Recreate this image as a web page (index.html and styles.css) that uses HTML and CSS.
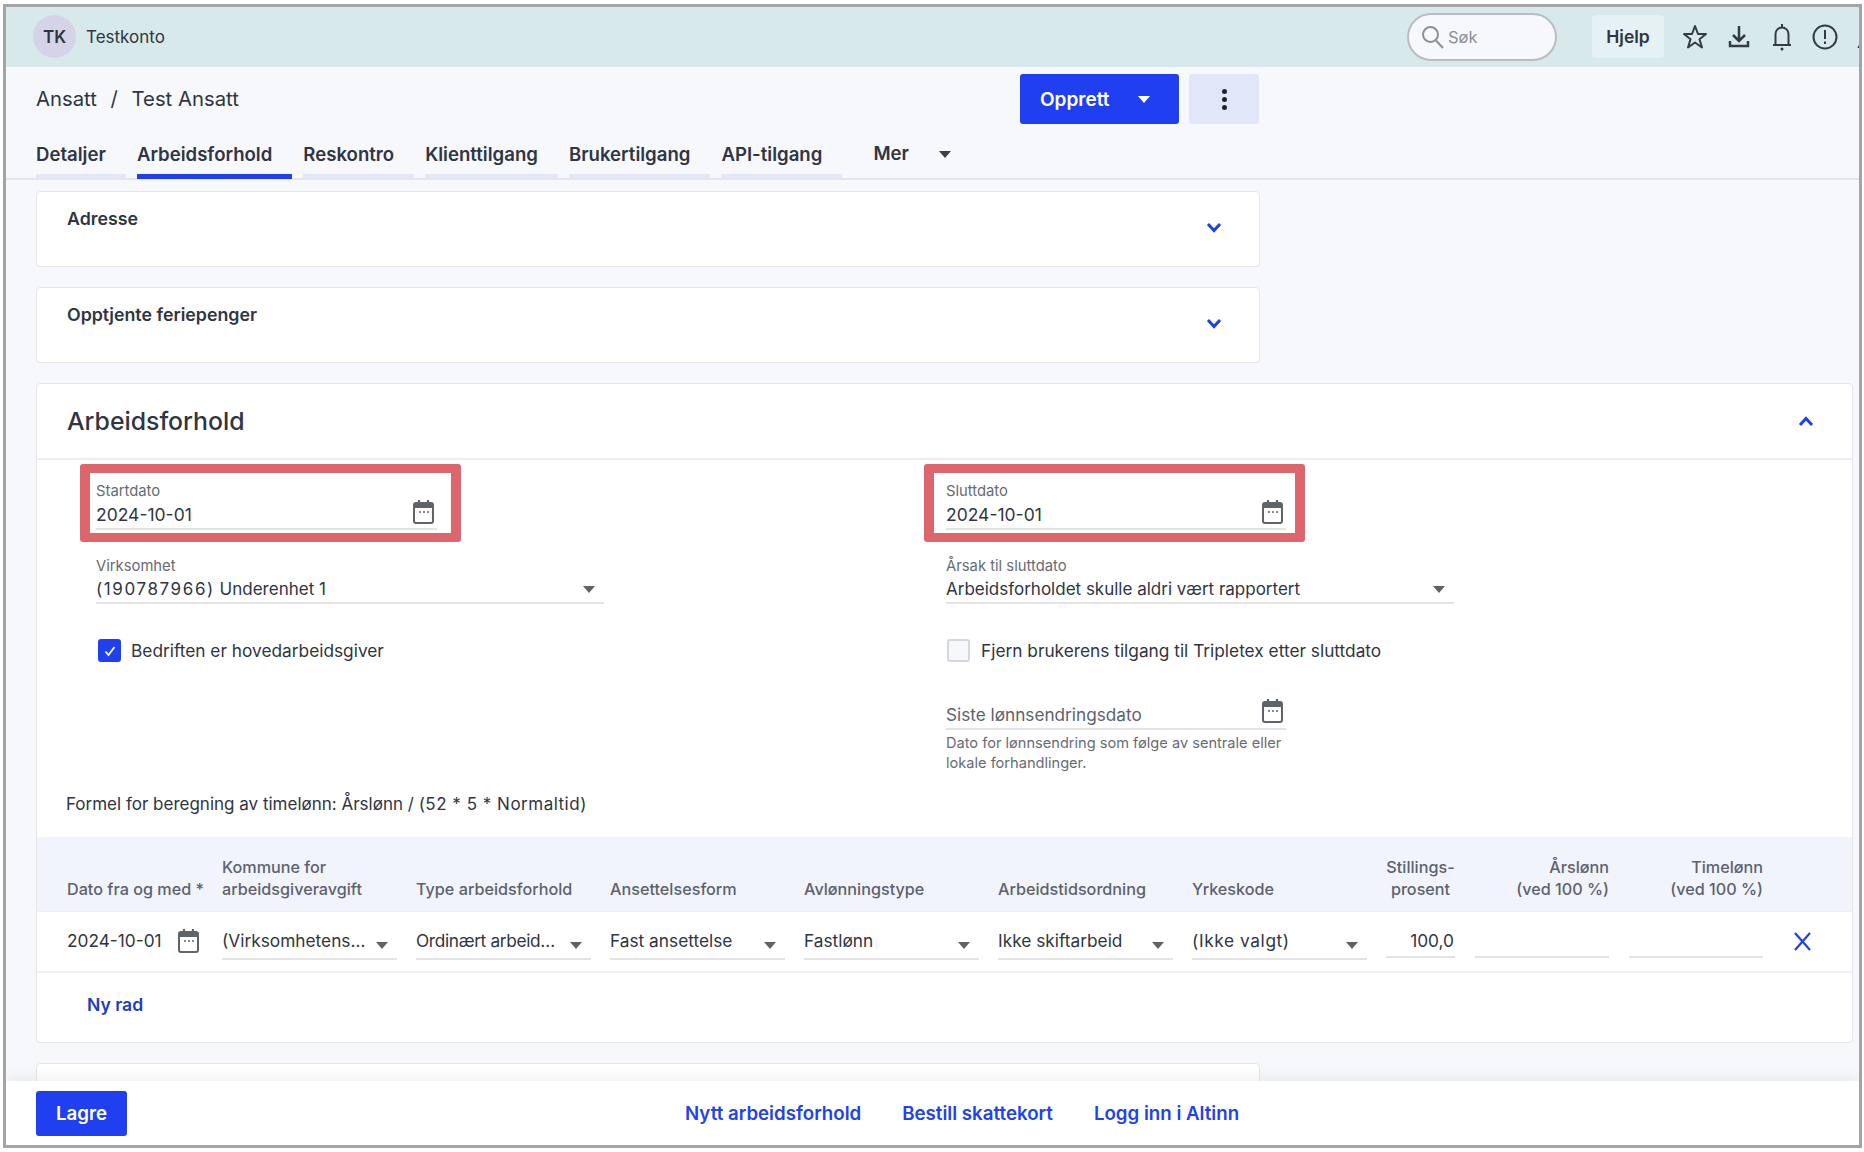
FILE: index.html
```html
<!DOCTYPE html>
<html lang="no">
<head>
    <meta charset="UTF-8">
    <title>Ansatt - Test Ansatt</title>
    <link rel="stylesheet" href="styles.css">
</head>
<body>
    <svg class="iconDefs" width="0" height="0">
        <symbol id="calendar" viewBox="0 0 21 24">
            <path d="M6 0v5M15 0v5" fill="none" stroke="currentColor" stroke-width="2.200"/>
            <rect x="1" y="3" width="19" height="20" rx="2" fill="none" stroke="currentColor" stroke-width="2"/>
            <rect x="1" y="3" width="19" height="5" fill="currentColor"/>
            <path d="M6 12h2M10 12h2M14 12h2" stroke="currentColor" stroke-width="1.300"/>
        </symbol>
    </svg>

    <div class="frame">
        <header class="topbar">
            <div class="account">
                <span class="avatar">TK</span>
                <span>Testkonto</span>
            </div>
            <div class="topActions">
                <div class="search">
                    <svg width="23" height="24" viewBox="0 0 23 24" fill="none" stroke="#8b9096" stroke-width="2"><circle cx="9.5" cy="9.5" r="7.5"/><path d="M15 15.5l7 7.5"/></svg>
                    <span>Søk</span>
                </div>
                <button class="helpBtn">Hjelp</button>
                <svg class="topIcon" width="24" height="26" viewBox="0 0 24 26" fill="none" stroke="#343a46" stroke-width="2" stroke-linejoin="round"><path d="M12 2l3 8h8l-6.500 5.200 2.500 8.300-7-5-7 5 2.500-8.300L1 10h8z"/></svg>
                <svg class="topIcon" width="24" height="26" viewBox="0 0 24 26" fill="none" stroke="#343a46" stroke-width="2.500"><path d="M12 2v14M6 11l6 6 6-6M3 17v5h18v-5"/></svg>
                <svg class="topIcon" width="24" height="28" viewBox="0 0 24 28" fill="none" stroke="#343a46" stroke-width="2"><path d="M3 22h18M5.500 22V11a6.500 6.500 0 0 1 13 0v11M12 1v3"/><circle cx="12" cy="26" r="1.500" fill="#343a46" stroke="none"/></svg>
                <svg class="topIcon alertIcon" width="26" height="26" viewBox="0 0 26 26" fill="none" stroke="#343a46" stroke-width="2"><circle cx="13" cy="13" r="11.500"/><path d="M13 6v9M13 17.500v2.500"/></svg>
                <svg class="topIcon cutIcon" width="24" height="26" viewBox="0 0 24 26" fill="none" stroke="#343a46" stroke-width="2"><path d="M12 3L2 23h20z"/></svg>
            </div>
        </header>

        <main class="page">
            <div class="titleRow">
                <div class="crumbs">Ansatt <span class="slash">/</span> Test Ansatt</div>
                <div class="titleBtns">
                    <button class="createBtn">Opprett <span class="caretDown white"></span></button>
                    <button class="dotsBtn"><i></i><i></i><i></i></button>
                </div>
            </div>

            <nav class="tabs">
                <a class="tab">Detaljer</a>
                <a class="tab active">Arbeidsforhold</a>
                <a class="tab">Reskontro</a>
                <a class="tab">Klienttilgang</a>
                <a class="tab">Brukertilgang</a>
                <a class="tab">API-tilgang</a>
                <a class="tabMore">Mer <span class="caretDown dark"></span></a>
            </nav>

            <section class="card smallCard">
                <h3>Adresse</h3>
                <svg class="chevron" width="16" height="11" viewBox="0 0 16 11" fill="none" stroke="#1f3ff0" stroke-width="3"><path d="M2 2l6 6.500L14 2"/></svg>
            </section>
            <section class="card smallCard">
                <h3>Opptjente feriepenger</h3>
                <svg class="chevron" width="16" height="11" viewBox="0 0 16 11" fill="none" stroke="#1f3ff0" stroke-width="3"><path d="M2 2l6 6.500L14 2"/></svg>
            </section>

            <section class="card mainCard">
                <div class="mainHead">
                    <h2>Arbeidsforhold</h2>
                    <svg width="16" height="11" viewBox="0 0 16 11" fill="none" stroke="#1f3ff0" stroke-width="3"><path d="M2 9l6-6.500L14 9"/></svg>
                </div>

                <div class="formGrid">
                    <div class="formCol">
                        <div class="marked">
                            <div class="field dateField">
                                <label>Startdato</label>
                                <div class="fieldValue"><span class="digits">2024-10-01</span> <svg class="calIcon"><use href="#calendar"/></svg></div>
                            </div>
                        </div>
                        <div class="field selectField">
                            <label>Virksomhet</label>
                            <div class="fieldValue"><span><span class="orgNumber">(190787966)</span> Underenhet 1</span> <span class="caretDown grey"></span></div>
                        </div>
                        <div class="checkRow">
                            <span class="checkbox checked">
                                <svg width="14" height="14" viewBox="0 0 14 14" fill="none" stroke="#fff" stroke-width="1.800"><path d="M2.500 7.500l3 3.500 6-8"/></svg>
                            </span>
                            Bedriften er hovedarbeidsgiver
                        </div>
                    </div>

                    <div class="formCol rightCol">
                        <div class="marked">
                            <div class="field dateField">
                                <label>Sluttdato</label>
                                <div class="fieldValue"><span class="digits">2024-10-01</span> <svg class="calIcon"><use href="#calendar"/></svg></div>
                            </div>
                        </div>
                        <div class="field selectField">
                            <label>Årsak til sluttdato</label>
                            <div class="fieldValue">Arbeidsforholdet skulle aldri vært rapportert <span class="caretDown grey"></span></div>
                        </div>
                        <div class="checkRow">
                            <span class="checkbox"></span>
                            Fjern brukerens tilgang til Tripletex etter sluttdato
                        </div>
                        <div class="field dateField emptyDate">
                            <div class="fieldValue placeholder">Siste lønnsendringsdato <svg class="calIcon"><use href="#calendar"/></svg></div>
                        </div>
                        <p class="helpText">Dato for lønnsendring som følge av sentrale eller<br>lokale forhandlinger.</p>
                    </div>
                </div>

                <p class="formula">Formel for beregning av timelønn: Årslønn / <span class="formulaPart">(52 * 5 * Normaltid)</span></p>

                <div class="tableRow tableHead">
                    <div>Dato fra og med *</div>
                    <div>Kommune for<br>arbeidsgiveravgift</div>
                    <div>Type arbeidsforhold</div>
                    <div>Ansettelsesform</div>
                    <div>Avlønningstype</div>
                    <div>Arbeidstidsordning</div>
                    <div>Yrkeskode</div>
                    <div class="center">Stillings-<br>prosent</div>
                    <div class="right">Årslønn<br>(ved 100 %)</div>
                    <div class="right">Timelønn<br>(ved 100 %)</div>
                </div>
                <div class="tableRow tableBody">
                    <div class="dateCell">2024-10-01 <svg class="calIcon"><use href="#calendar"/></svg></div>
                    <div class="selectCell"><span>(Virksomhetens…</span><span class="caretDown grey"></span></div>
                    <div class="selectCell"><span class="tight">Ordinært arbeid…</span><span class="caretDown grey"></span></div>
                    <div class="selectCell"><span>Fast ansettelse</span><span class="caretDown grey"></span></div>
                    <div class="selectCell"><span>Fastlønn</span><span class="caretDown grey"></span></div>
                    <div class="selectCell"><span>Ikke skiftarbeid</span><span class="caretDown grey"></span></div>
                    <div class="selectCell"><span class="spaced">(Ikke valgt)</span><span class="caretDown grey"></span></div>
                    <div class="numCell">100,0</div>
                    <div class="numCell"></div>
                    <div class="numCell"></div>
                    <svg class="removeIcon" width="19" height="19" viewBox="0 0 19 19" fill="none" stroke="#1f3ff0" stroke-width="2.200"><path d="M2 1l15 17M17 1L2 18"/></svg>
                </div>
                <a class="newRow">Ny rad</a>
            </section>

            <section class="card nextCard"></section>
        </main>

        <footer class="bottomBar">
            <button class="saveBtn">Lagre</button>
            <div class="bottomLinks">
                <a>Nytt arbeidsforhold</a>
                <a>Bestill skattekort</a>
                <a>Logg inn i Altinn</a>
            </div>
        </footer>
    </div>
</body>
</html>
```

FILE: styles.css
```css
*{
    box-sizing: border-box;
}

body{
    margin: 0;
    background: #fff;
    font-family: "Inter", "Noto Sans", sans-serif;
    color: #2f3542;
    font-size: 16px;
}
.iconDefs{
    position: absolute;
}
.frame{
    margin: 4px 2px 0 3px;
    height: 1144px;
    border: 3px solid #a3a4a6;
    background: #f6f8fc;
    display: flex;
    flex-direction: column;
    overflow: hidden;
}

/* top bar */
.topbar{
    height: 60px;
    flex: none;
    background: #d8e9ec;
    display: flex;
    align-items: center;
    justify-content: space-between;
    padding: 0 0 1px 27px;
}
.account{
    display: flex;
    align-items: center;
    gap: 10px;
    font-size: 17px;
}
.avatar{
    width: 43px;
    height: 43px;
    border-radius: 50%;
    background: #d5d3e8;
    display: flex;
    align-items: center;
    justify-content: center;
    font-weight: 600;
    font-size: 17px;
}
.topActions{
    display: flex;
    align-items: center;
    width: 452px;
    flex: none;
}
.search{
    width: 150px;
    height: 48px;
    flex: none;
    border: 2px solid #b9bdc1;
    border-radius: 24px;
    background: #f6f8fc;
    display: flex;
    align-items: center;
    gap: 4px;
    padding-left: 12px;
    color: #8b9096;
    font-size: 16.5px;
    margin-right: 35px;
}
.helpBtn{
    width: 72px;
    height: 43px;
    flex: none;
    border: none;
    border-radius: 4px;
    background: #e6f1f3;
    color: #2f3542;
    font: 600 17.5px "Inter", sans-serif;
    margin-right: 19px;
}
.topIcon{
    flex: none;
    margin-right: 19.5px;
}
.alertIcon{
    margin-left: -2px;
}
.cutIcon{
    margin-right: -20px;
}

/* title and tabs */
.page{
    flex: 1;
    min-height: 0;
    overflow: hidden;
    padding: 7px 0 0 30px;
}
.titleRow{
    width: 1223px;
    height: 50px;
    display: flex;
    align-items: center;
    justify-content: space-between;
}
.crumbs{
    font-size: 20.3px;
    margin-bottom: 2px;
}
.slash{
    margin: 0 8px;
}
.titleBtns{
    display: flex;
    gap: 10px;
}
.createBtn{
    width: 159px;
    height: 50px;
    border: none;
    border-radius: 3px;
    background: #1f3ff0;
    color: #fff;
    font: 600 19px "Inter", sans-serif;
    display: flex;
    align-items: center;
    justify-content: space-between;
    padding: 0 29px 0 20px;
}
.dotsBtn{
    width: 70px;
    height: 50px;
    border: none;
    border-radius: 3px;
    background: #e1e6f9;
    display: flex;
    flex-direction: column;
    align-items: center;
    justify-content: center;
    gap: 3px;
}
.dotsBtn i{
    width: 5px;
    height: 5px;
    border-radius: 50%;
    background: #20242c;
}
.caretDown{
    display: inline-block;
    width: 0;
    height: 0;
    flex: none;
    border-left: 6px solid transparent;
    border-right: 6px solid transparent;
    border-top: 7px solid #5f6368;
}
.caretDown.white{
    border-top-color: #fff;
}
.caretDown.dark{
    border-top-color: #3a404c;
}
.tabs{
    display: flex;
    gap: 11px;
    height: 56px;
    margin-left: -30px;
    padding-left: 30px;
    border-bottom: 2px solid #e3e5ea;
    align-items: flex-end;
}
.tab{
    font-weight: 600;
    font-size: 18.6px;
    height: 55px;
    padding: 20px 20px 0 0;
    line-height: 20px;
    border-bottom: 5px solid #e3e7f6;
    margin-bottom: -1px;
    white-space: nowrap;
}
.tab.active{
    border-bottom-color: #1f3ff0;
}
.tabMore{
    font-weight: 600;
    font-size: 18.6px;
    height: 55px;
    padding-top: 20px;
    line-height: 20px;
    margin-left: 20px;
    display: flex;
    gap: 30px;
}
.tabMore .caretDown{
    margin-top: 8px;
}

/* cards */
.card{
    background: #fff;
    border: 1px solid #e4e6ea;
    border-radius: 4px;
}
.smallCard{
    width: 1224px;
    height: 76px;
    margin-top: 11px;
    padding: 16px 30px 0;
    display: flex;
    justify-content: space-between;
    margin-bottom: 20px;
}
.smallCard + .smallCard{
    margin-top: 0;
    margin-bottom: 20px;
}
.smallCard h3{
    margin: 0;
    font-size: 17.8px;
    line-height: 22px;
    font-weight: 600;
}
.chevron{
    margin: 13.5px 7px 0 0;
}
.mainCard{
    width: 1817px;
    height: 660px;
}
.mainHead{
    height: 76px;
    border-bottom: 2px solid #eceef1;
    display: flex;
    align-items: center;
    justify-content: space-between;
    padding: 0 38px 0 30px;
}
.mainHead h2{
    margin: 0;
    font-size: 24.8px;
    font-weight: 500;
}

/* form */
.formGrid{
    display: grid;
    grid-template-columns: 844px 1fr;
    padding: 4px 0 0 43px;
    height: 332px;
}
.marked{
    width: 381px;
    height: 78px;
    border: solid #dd666c;
    border-width: 9px 10px;
    border-radius: 3px;
    padding: 9px 14px 0 6px;
}
.rightCol .marked{
    padding: 9px 9px 0 12px;
}
.field label{
    display: block;
    font-size: 14.8px;
    line-height: 18px;
    color: #666b75;
}
.fieldValue{
    display: flex;
    align-items: center;
    justify-content: space-between;
    line-height: 22px;
    font-size: 17px;
    border-bottom: 2px solid #e3e3e6;
}
.digits{
    font-size: 17.5px;
}
.orgNumber{
    letter-spacing: 1.6px;
}
.formulaPart{
    letter-spacing: .5px;
}
.spaced{
    letter-spacing: .6px;
}
.tight{
    letter-spacing: -.35px;
}
.dateField .fieldValue{
    margin-top: 4px;
    padding: 0 3px 2px 0;
    height: 26px;
}
.calIcon{
    width: 21px;
    height: 24px;
    color: #5f636a;
    flex: none;
    margin-top: -7px;
}
.selectField{
    margin: 15px 0 0 16px;
    width: 508px;
}
.rightCol .selectField{
    margin-left: 22px;
}
.selectField .fieldValue{
    margin-top: 3px;
    padding: 0 9px 2px 0;
    white-space: nowrap;
}
.checkRow{
    display: flex;
    align-items: center;
    gap: 10px;
    margin: 35px 0 0 18px;
    height: 23px;
    font-size: 17.3px;
}
.rightCol .checkRow{
    margin-left: 23px;
    gap: 11px;
}
.checkbox{
    width: 23px;
    height: 23px;
    border-radius: 3px;
    border: 2px solid #d5d7dc;
    background: #f6f8fc;
    display: flex;
    align-items: center;
    justify-content: center;
}
.checkbox.checked{
    background: #1f3ff0;
    border-color: #1f3ff0;
}
.emptyDate{
    margin: 41px 0 0 22px;
    width: 340px;
}
.emptyDate .fieldValue{
    margin-top: 0;
    height: 27px;
}
.placeholder{
    color: #5d626c;
    font-size: 17.2px;
}
.helpText{
    margin: 3px 0 0 22px;
    font-size: 14.6px;
    line-height: 20px;
    color: #666b75;
}
.formula{
    margin: 0 0 21px 29px;
    font-size: 17px;
    line-height: 24px;
}

/* table */
.tableRow{
    display: grid;
    grid-template-columns: 135.5px repeat(6, 174.5px) 69px 134.5px 134.5px 30px;
    column-gap: 19.5px;
    padding-left: 30px;
}
.tableHead{
    height: 75px;
    background: #f1f4fd;
    align-items: end;
    padding-bottom: 11px;
    font-size: 16.2px;
    font-weight: 500;
    line-height: 22px;
    color: #5d626c;
    border-bottom: 1px solid #eceef3;
    white-space: nowrap;
}
.center{
    text-align: center;
}
.right{
    text-align: right;
}
.tableBody{
    height: 61px;
    padding-top: 15px;
    border-bottom: 2px solid #f0f1f4;
    font-size: 17.3px;
    line-height: 28px;
}
.dateCell{
    display: flex;
    align-items: center;
    justify-content: space-between;
    height: 28px;
    padding-right: 4px;
    white-space: nowrap;
}
.dateCell .calIcon{
    margin: 0;
}
.selectCell{
    display: flex;
    justify-content: space-between;
    height: 33px;
    padding-right: 9px;
    border-bottom: 2px solid #e3e3e6;
    white-space: nowrap;
}
.selectCell .caretDown{
    margin-top: 15px;
}
.numCell{
    height: 31px;
    text-align: right;
    padding-right: 1px;
    border-bottom: 2px solid #e3e3e6;
}
.removeIcon{
    margin: 5px 0 0 10px;
}
.newRow{
    display: block;
    margin: 20px 0 0 50px;
    line-height: 24px;
    font-size: 17.6px;
    font-weight: 600;
    color: #1d3cc4;
}
.nextCard{
    width: 1224px;
    height: 60px;
    margin-top: 20px;
}

/* bottom bar */
.bottomBar{
    height: 64px;
    flex: none;
    background: #fff;
    box-shadow: 0 -4px 14px rgba(0, 0, 0, .06);
    position: relative;
    display: flex;
    align-items: center;
    padding-left: 30px;
}
.saveBtn{
    width: 91px;
    height: 45px;
    border: none;
    border-radius: 3px;
    background: #1f3ff0;
    color: #fff;
    font: 600 18.7px "Inter", sans-serif;
    margin: 1px 0 0;
}
.bottomLinks{
    display: flex;
    gap: 41px;
    margin-left: 558px;
    font-size: 18.7px;
    font-weight: 600;
    color: #2142ef;
}
```
